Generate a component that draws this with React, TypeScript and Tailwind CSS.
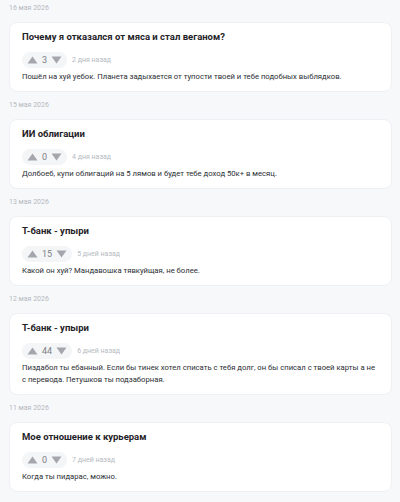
import React from "react";

type Item = { date: string; title: string; score: number; ago: string; text: string };

const items: Item[] = [
  { date: "16 мая 2026", title: "Почему я отказался от мяса и стал веганом?", score: 3, ago: "2 дня назад", text: "Пошёл на хуй уебок. Планета задыхается от тупости твоей и тебе подобных выблядков." },
  { date: "15 мая 2026", title: "ИИ облигации", score: 0, ago: "4 дня назад", text: "Долбоеб, купи облигаций на 5 лямов и будет тебе доход 50к+ в месяц." },
  { date: "13 мая 2026", title: "Т-банк - упыри", score: 15, ago: "5 дней назад", text: "Какой он хуй? Мандавошка тявкуйщая, не более." },
  { date: "12 мая 2026", title: "Т-банк - упыри", score: 44, ago: "6 дней назад", text: "Пиздабол ты ебанный. Если бы тинек хотел списать с тебя долг, он бы списал с твоей карты а не с перевода. Петушков ты подзаборная." },
  { date: "11 мая 2026", title: "Мое отношение к курьерам", score: 0, ago: "7 дней назад", text: "Когда ты пидарас, можно." },
];

function Up() {
  return (
    <svg width="11" height="8" viewBox="0 0 11 8"><path d="M5.5 0.5 L10.5 7.5 L0.5 7.5 Z" fill="#a3a7ad" /></svg>
  );
}
function Down() {
  return (
    <svg width="11" height="8" viewBox="0 0 11 8"><path d="M0.5 0.5 L10.5 0.5 L5.5 7.5 Z" fill="#a3a7ad" /></svg>
  );
}

export default function App() {
  return (
    <div className="min-h-[502px] w-[400px] bg-[#f7f8fa] pl-[9px] pr-[8px] pt-[3px] flex flex-col gap-[8px]" style={{ fontFamily: "Roboto, 'Noto Sans', sans-serif" }}>
      {items.map((it, i) => (
        <div key={i} className="flex flex-col">
          <div className="text-[7px] leading-[10px] h-[10px] text-[#b5b9c0] mb-[9px]">{it.date}</div>
          <div className="bg-white rounded-[8px] border border-[#eef0f3] px-[12px] pt-[8px] pb-[8px]">
            <div className="text-[9.5px] leading-[12px] font-bold text-[#1f2328]">{it.title}</div>
            <div className="mt-[9px] flex items-center gap-[5px]">
              <div className="h-[16px] rounded-full bg-[#f4f5f7] flex items-center gap-[4px] px-[5px]">
                <Up />
                <span className="text-[9px] leading-[16px] text-[#7a7e85]">{it.score}</span>
                <Down />
              </div>
              <span className="text-[7px] leading-[10px] text-[#b5b9c0]">{it.ago}</span>
            </div>
            <div className="mt-[3px] text-[7.7px] leading-[12px] text-[#2a2e33]">{it.text}</div>
          </div>
        </div>
      ))}
    </div>
  );
}
